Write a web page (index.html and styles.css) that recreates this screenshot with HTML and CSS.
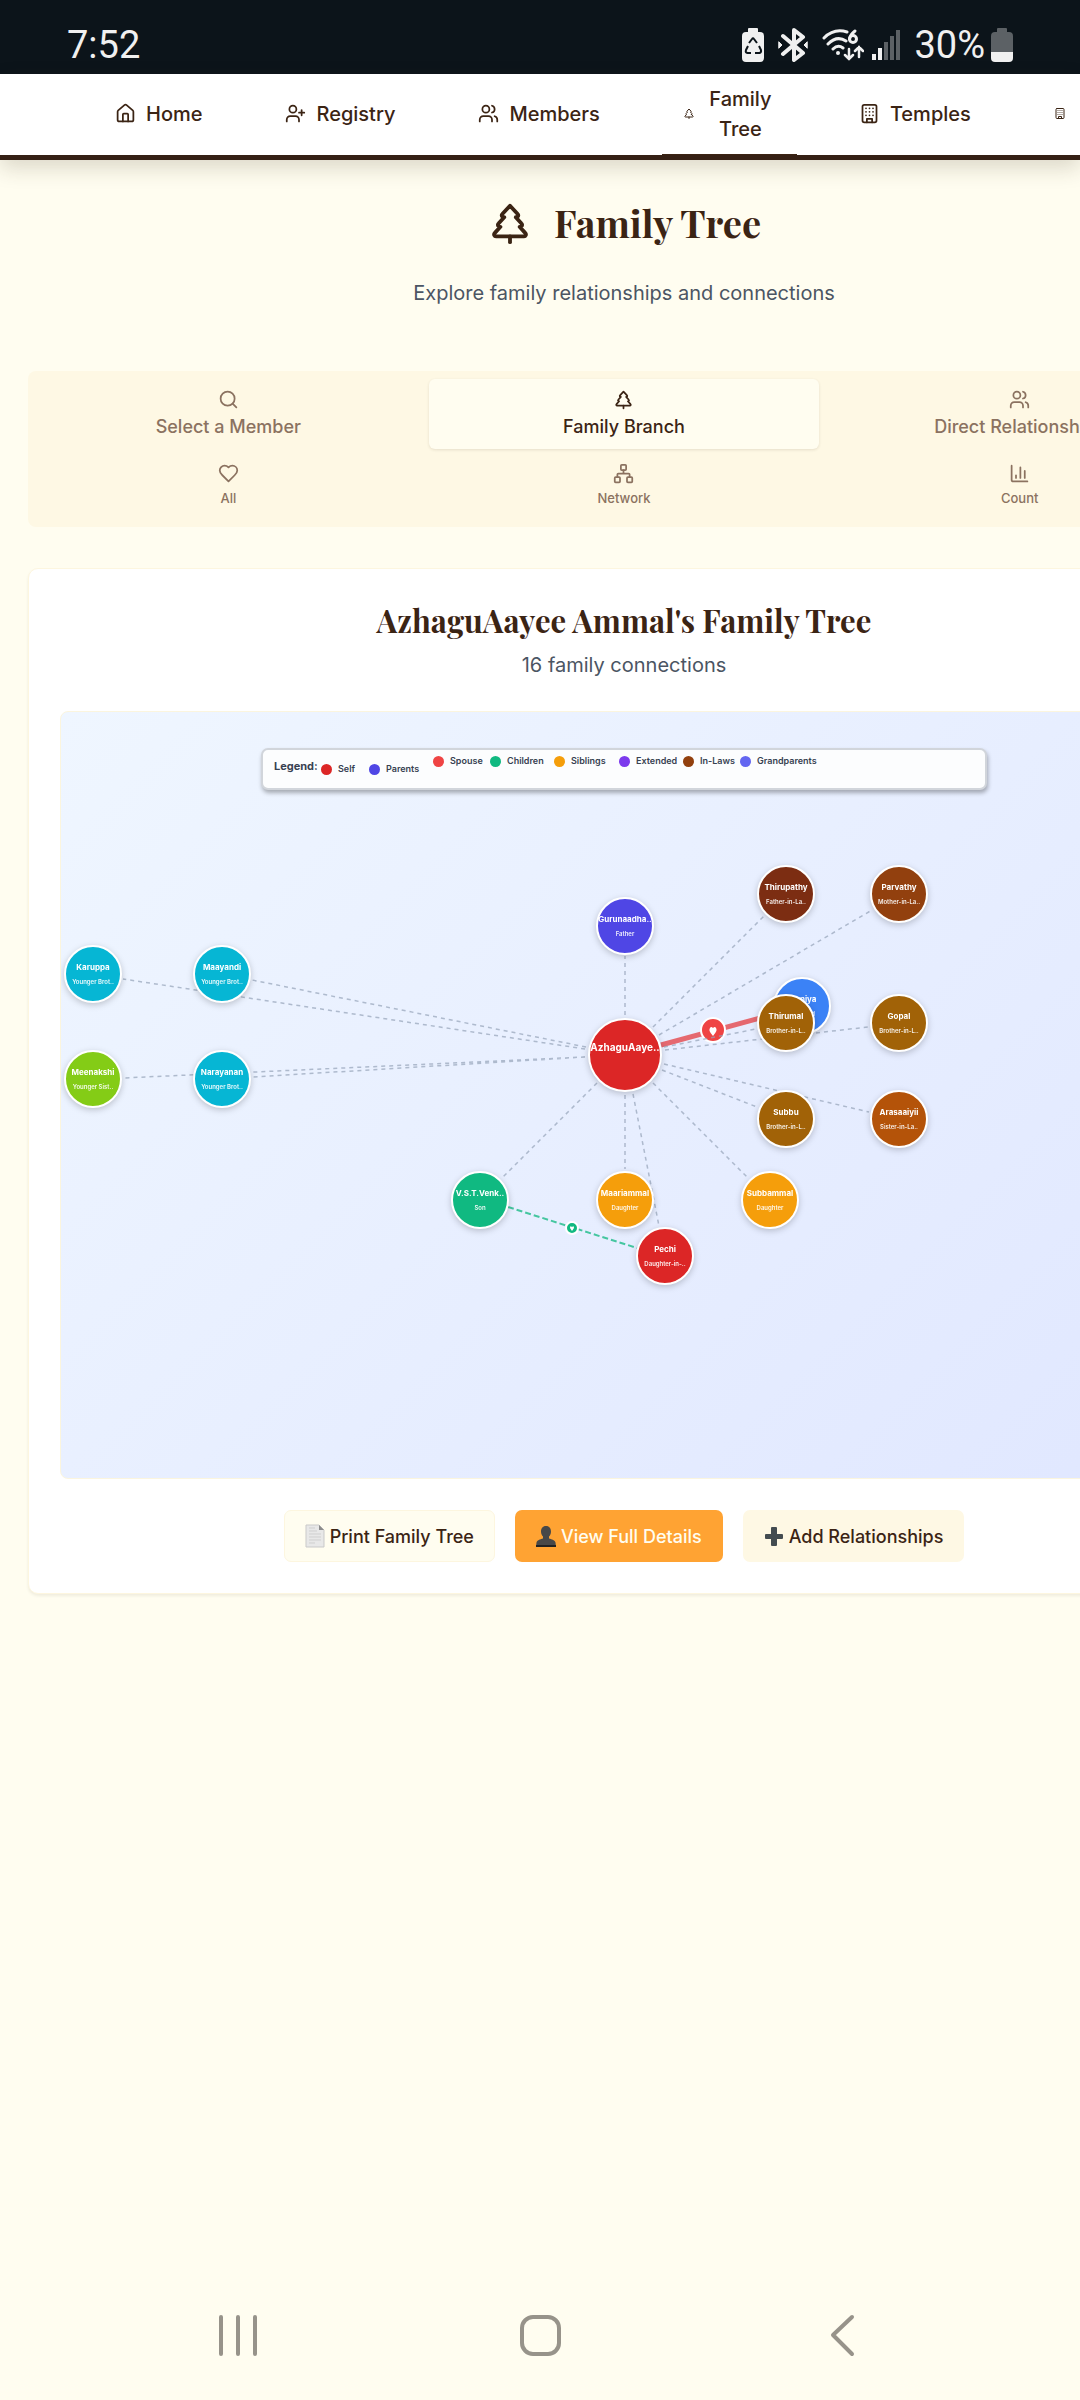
FILE: index.html
```html
<!DOCTYPE html>
<html lang="en">
<head>
<meta charset="utf-8">
<meta name="viewport" content="width=device-width, initial-scale=1">
<title>Family Tree</title>
<link rel="stylesheet" href="styles.css">
</head>
<body>
<svg class="sprite" aria-hidden="true">
  <symbol id="pine" viewBox="0 0 24 24"><path d="m17 14 3 3.3a1 1 0 0 1-.7 1.7H4.7a1 1 0 0 1-.7-1.7L7 14h-.3a1 1 0 0 1-.7-1.7L9 9h-.2A1 1 0 0 1 8 7.3L12 3l4 4.3a1 1 0 0 1-.8 1.7H15l3 3.3a1 1 0 0 1-.7 1.7H17Z"/><path d="M12 22v-3"/></symbol>
  <symbol id="users" viewBox="0 0 24 24"><path d="M16 21v-2a4 4 0 0 0-4-4H6a4 4 0 0 0-4 4v2"/><circle cx="9" cy="7" r="4"/><path d="M22 21v-2a4 4 0 0 0-3-3.87M16 3.13a4 4 0 0 1 0 7.75"/></symbol>
  <symbol id="building" viewBox="0 0 24 24"><rect x="4" y="2" width="16" height="20" rx="2"/><path d="M9 22v-4h6v4M8 6h.01M16 6h.01M12 6h.01M12 10h.01M12 14h.01M16 10h.01M16 14h.01M8 10h.01M8 14h.01"/></symbol>
</svg>

<div class="status">
  <span class="clock">7:52</span>
  <div class="status-icons">
    <svg width="22" height="34" viewBox="0 0 22 34"><path d="M7 0h8a1 1 0 0 1 1 1v3h2a4 4 0 0 1 4 4v22a4 4 0 0 1-4 4H4a4 4 0 0 1-4-4V8a4 4 0 0 1 4-4h2V1a1 1 0 0 1 1-1Z" fill="#f0f0f0"/><path d="m7 15 3-4q1-1.500 2 0l3 4M17 18l2 4q.5 2.500-1.500 3H13M9 25H5.500Q3 24.500 4 22l2-4" fill="none" stroke="#0c141a" stroke-width="2"/></svg>
    <svg width="30" height="34" viewBox="0 0 30 34" fill="none" stroke="#f0f0f0" stroke-width="4" stroke-linecap="round" stroke-linejoin="round"><path d="m5 8 20 17-9 7V2l9 7L5 26"/><path d="m1 14 3 3-3 3ZM29 14l-3 3 3 3Z" stroke-width="1" fill="#f0f0f0"/></svg>
    <svg width="42" height="34" viewBox="0 0 42 34" fill="none" stroke="#f0f0f0" stroke-width="3" stroke-linecap="round"><path d="M2 10Q12 0 25 4M6 16q9-9 18-3M11 21q5-5 10-1"/><circle cx="16" cy="25" r="2" fill="#f0f0f0" stroke="none"/><path d="M33 3q-5 4-5.500 8"/><circle cx="31" cy="11" r="3.500"/><path d="M27 21v10m-4-4 4 4 4-4M37 29V19m-4 4 4-4 4 4" stroke-width="2.500"/></svg>
    <svg width="28" height="34" viewBox="0 0 28 34"><path d="M0 26h4v6H0ZM6 20h4v12H6Z" fill="#f0f0f0"/><path d="M12 14h4v18h-4ZM18 8h4v24h-4ZM24 2h4v30h-4Z" fill="#5c6165"/></svg>
    <span class="percent">30%</span>
    <svg width="22" height="34" viewBox="0 0 22 34"><path d="M7 0h8a1 1 0 0 1 1 1v3h2a4 4 0 0 1 4 4v16H0V8a4 4 0 0 1 4-4h2V1a1 1 0 0 1 1-1Z" fill="#5c6165"/><path d="M0 24h22v6a4 4 0 0 1-4 4H4a4 4 0 0 1-4-4Z" fill="#f0f0f0"/></svg>
  </div>
</div>

<header class="topbar">
  <nav class="nav">
    <a class="nav-link" href="#home"><svg class="icon" viewBox="0 0 24 24"><path d="M15 21v-8a1 1 0 0 0-1-1h-4a1 1 0 0 0-1 1v8"/><path d="M3 10a2 2 0 0 1 .709-1.528l7-5.999a2 2 0 0 1 2.582 0l7 5.999A2 2 0 0 1 21 10v9a2 2 0 0 1-2 2H5a2 2 0 0 1-2-2z"/></svg><span>Home</span></a>
    <a class="nav-link" href="#registry"><svg class="icon" viewBox="0 0 24 24"><path d="M16 21v-2a4 4 0 0 0-4-4H6a4 4 0 0 0-4 4v2"/><circle cx="9" cy="7" r="4"/><path d="M19 8v6M22 11h-6"/></svg><span>Registry</span></a>
    <a class="nav-link" href="#members"><svg class="icon"><use href="#users"/></svg><span>Members</span></a>
    <a class="nav-link current" href="#tree"><svg class="icon tight"><use href="#pine"/></svg><span>Family Tree</span></a>
    <a class="nav-link" href="#temples"><svg class="icon"><use href="#building"/></svg><span>Temples</span></a>
    <a class="nav-link" href="#more" aria-label="More"><svg class="icon tight"><use href="#building"/></svg></a>
  </nav>
</header>

<main class="page">
  <h1 class="title"><svg class="icon title-icon"><use href="#pine"/></svg><span>Family Tree</span></h1>
  <p class="lead">Explore family relationships and connections</p>

  <div class="tabs" role="tablist">
    <button class="tab" role="tab" type="button"><svg class="icon" viewBox="0 0 24 24"><circle cx="11" cy="11" r="8"/><path d="m21 21-4.300-4.300"/></svg><span>Select a Member</span></button>
    <button class="tab active" role="tab" type="button" aria-selected="true"><svg class="icon"><use href="#pine"/></svg><span>Family Branch</span></button>
    <button class="tab" role="tab" type="button"><svg class="icon"><use href="#users"/></svg><span>Direct Relationships</span></button>
    <button class="tab small" role="tab" type="button"><svg class="icon" viewBox="0 0 24 24"><path d="M19 14c1.490-1.460 3-3.210 3-5.500A5.500 5.500 0 0 0 16.500 3c-1.760 0-3 .5-4.500 2-1.500-1.500-2.740-2-4.500-2A5.500 5.500 0 0 0 2 8.500c0 2.300 1.500 4.050 3 5.500l7 7Z"/></svg><span>All</span></button>
    <button class="tab small" role="tab" type="button"><svg class="icon" viewBox="0 0 24 24"><rect x="16" y="16" width="6" height="6" rx="1"/><rect x="2" y="16" width="6" height="6" rx="1"/><rect x="9" y="2" width="6" height="6" rx="1"/><path d="M5 16v-3a1 1 0 0 1 1-1h12a1 1 0 0 1 1 1v3M12 12V8"/></svg><span>Network</span></button>
    <button class="tab small" role="tab" type="button"><svg class="icon" viewBox="0 0 24 24"><path d="M3 3v16a2 2 0 0 0 2 2h16M18 17V9M13 17V5M8 17v-3"/></svg><span>Count</span></button>
  </div>

  <section class="card">
    <h2 class="card-title">AzhaguAayee Ammal's Family Tree</h2>
    <p class="card-sub">16 family connections</p>

    <div class="canvas">
      <div class="legend">
        <strong>Legend:</strong>
        <span class="key low self">Self</span>
        <span class="key low parents">Parents</span>
        <span class="key spouse">Spouse</span>
        <span class="key children">Children</span>
        <span class="key siblings">Siblings</span>
        <span class="key extended">Extended</span>
        <span class="key inlaws">In-Laws</span>
        <span class="key grand">Grandparents</span>
      </div>
      <svg class="graph" viewBox="0 0 1126 766">
        <g transform="translate(564 343)">
          <path class="marriage" d="M36-10 150-41"/>
          <circle cx="88" cy="-25" r="12" fill="#ef4444" stroke="#fff" stroke-width="2"/>
          <path d="M88-19c-4-5-4-6-3-8q1-2 3 0 2-2 3 0c1 2 1 3-3 8Z" fill="#fff"/>
          <path class="couple" d="M-117 152 12 193"/>
          <circle cx="-53" cy="173" r="6" fill="#10b981" stroke="#fff" stroke-width="2"/>
          <path d="M-53 176l-2-3q0-3 2-1 2-2 2 1Z" fill="#fff"/>
          <path class="links" d="M0-40V-99M28-28 139-139M34-20 247-145M39-8 131-26M40-5 243-28M37 15 132 52M39 9 244 57M-28 28-123 123M0 40V114M28 28 123 123M8 39 34 171M-40-6-502-76M-39-8-373-75M-40 2-502 23M-40 2-373 22"/>
          <g class="node"><circle r="36" fill="#dc2626"/><text class="name main" y="-4">AzhaguAaye..</text></g>
          <g class="node" transform="translate(0 -129)"><circle r="28" fill="#4f46e5"/><text class="name" y="-4">Gurunaadha..</text><text class="role" y="10">Father</text></g>
          <g class="node" transform="translate(177 -49)"><circle r="28" fill="#3b82f6"/><text class="name" y="-4">Muniya</text><text class="role" y="10">Husband</text></g>
          <g class="node" transform="translate(-145 145)"><circle r="28" fill="#10b981"/><text class="name" y="-4">V.S.T.Venk..</text><text class="role" y="10">Son</text></g>
          <g class="node" transform="translate(0 145)"><circle r="28" fill="#f59e0b"/><text class="name" y="-4">Maariammal</text><text class="role" y="10">Daughter</text></g>
          <g class="node" transform="translate(145 145)"><circle r="28" fill="#f59e0b"/><text class="name" y="-4">Subbammal</text><text class="role" y="10">Daughter</text></g>
          <g class="node" transform="translate(40 201)"><circle r="28" fill="#dc2626"/><text class="name" y="-4">Pechi</text><text class="role" y="10">Daughter-in-..</text></g>
          <g class="node" transform="translate(161 -161)"><circle r="28" fill="#7c2d12"/><text class="name" y="-4">Thirupathy</text><text class="role" y="10">Father-in-La..</text></g>
          <g class="node" transform="translate(274 -161)"><circle r="28" fill="#92400e"/><text class="name" y="-4">Parvathy</text><text class="role" y="10">Mother-in-La..</text></g>
          <g class="node" transform="translate(161 -32)"><circle r="28" fill="#a16207"/><text class="name" y="-4">Thirumal</text><text class="role" y="10">Brother-in-L..</text></g>
          <g class="node" transform="translate(274 -32)"><circle r="28" fill="#a16207"/><text class="name" y="-4">Gopal</text><text class="role" y="10">Brother-in-L..</text></g>
          <g class="node" transform="translate(161 64)"><circle r="28" fill="#a16207"/><text class="name" y="-4">Subbu</text><text class="role" y="10">Brother-in-L..</text></g>
          <g class="node" transform="translate(274 64)"><circle r="28" fill="#b45309"/><text class="name" y="-4">Arasaaiyii</text><text class="role" y="10">Sister-in-La..</text></g>
          <g class="node" transform="translate(-532 -81)"><circle r="28" fill="#06b6d4"/><text class="name" y="-4">Karuppa</text><text class="role" y="10">Younger Brot..</text></g>
          <g class="node" transform="translate(-403 -81)"><circle r="28" fill="#06b6d4"/><text class="name" y="-4">Maayandi</text><text class="role" y="10">Younger Brot..</text></g>
          <g class="node" transform="translate(-532 24)"><circle r="28" fill="#84cc16"/><text class="name" y="-4">Meenakshi</text><text class="role" y="10">Younger Sist..</text></g>
          <g class="node" transform="translate(-403 24)"><circle r="28" fill="#06b6d4"/><text class="name" y="-4">Narayanan</text><text class="role" y="10">Younger Brot..</text></g>
        </g>
      </svg>
    </div>

    <div class="actions">
      <button class="btn outline" type="button"><svg width="20" height="24" viewBox="0 0 20 24"><path d="M1 1h13l5 5v17H1Z" fill="#e8e8e8" stroke="#c9c9c9"/><path d="M14 1v5h5Z" fill="#8c8c8c"/><path d="M4 4h6M4 7h8M4 10h12M4 13h12M4 16h12M4 19h6" stroke="#cfcfcf"/></svg>Print Family Tree</button>
      <button class="btn primary" type="button"><svg width="20" height="24" viewBox="0 0 20 24"><path d="M10 2c3.500 0 5 2.500 5 5.500 0 2.500-1 4-2 5v2c3 1 6 1.500 6.500 4L20 23H0l.5-4.500c.5-2.500 3.500-3 6.500-4v-2c-1-1-2-2.500-2-5C5 4.500 6.500 2 10 2Z" fill="#484848"/><path d="M0 21h20v2H0Z" fill="#222"/></svg>View Full Details</button>
      <button class="btn soft" type="button"><svg width="20" height="24" viewBox="0 0 20 24"><path d="M8 3h4q1 0 1 1v6h5q1 0 1 1v3q0 1-1 1h-5v6q0 1-1 1H8q-1 0-1-1v-6H2q-1 0-1-1v-3q0-1 1-1h5V4q0-1 1-1Z" fill="#434c50"/></svg>Add Relationships</button>
    </div>
  </section>
</main>

<footer class="sysnav">
  <button type="button" aria-label="Recents"><svg width="42" height="44" viewBox="0 0 42 44"><path d="M4 4v37M21 4v37M38 4v37"/></svg></button>
  <button type="button" aria-label="Home screen"><svg width="42" height="44" viewBox="0 0 42 44"><rect x="3" y="4" width="37" height="37" rx="11"/></svg></button>
  <button type="button" aria-label="Back"><svg width="42" height="44" viewBox="0 0 42 44"><path d="M31 4 12 22l19 19"/></svg></button>
</footer>
</body>
</html>
```
FILE: styles.css
```css
* { box-sizing: border-box; }
body {
  margin: 0;
  min-height: 100vh;
  display: flex;
  flex-direction: column;
  overflow-x: hidden;
  background: #fffdf0;
  color: #3b2414;
  font-family: Inter, "Liberation Sans", sans-serif;
}
h1, h2, p { margin: 0; }
button { font: inherit; color: inherit; border: 0; background: none; padding: 0; }
.sprite { position: absolute; width: 0; height: 0; }
.icon {
  width: 21px; height: 21px; flex: none;
  fill: none; stroke: currentColor; stroke-width: 2;
  stroke-linecap: round; stroke-linejoin: round;
}

.status {
  display: flex; justify-content: space-between; align-items: center;
  height: 74px; padding: 15px 67px 0;
  background: #0c141a; color: #f0f0f0;
  font: 400 38px/44px Roboto, "Noto Sans", sans-serif;
}
.status-icons { display: flex; align-items: center; gap: 14px; }
.status-icons svg { flex: none; }
.status-icons svg:nth-of-type(4) { margin-left: -6px; }
.percent { margin-right: -8px; }

.topbar {
  position: relative;
  background: #fff;
  border-bottom: 5px solid #352014;
  box-shadow: 0 8px 20px rgba(60, 50, 30, .18);
}
.nav { display: flex; gap: 41px; height: 81px; padding-left: 94px; overflow: hidden; }
.nav-link {
  display: flex; align-items: center; gap: 10px; flex: none;
  padding: 0 21px 2px;
  color: inherit; text-decoration: none; text-align: center;
  font-size: 20px; line-height: 30px; font-weight: 500;
}
.nav-link.current { width: 135px; padding-bottom: 1px; border-bottom: 1px solid #3b2414; }
.nav-link.current span { flex: 1; }
.icon.tight { width: 12px; }

.page { width: 100%; min-width: 1248px; padding: 38px 28px 0; }
.title {
  display: flex; justify-content: center; align-items: center; gap: 21px;
  font: 700 38px/50px "Playfair Display", "Liberation Serif", serif;
}
.title-icon { width: 46px; height: 46px; }
.lead, .card-sub { font-size: 20px; line-height: 30px; color: #4b5563; text-align: center; }
.lead { margin-top: 30px; }

.tabs {
  display: grid; grid-template-columns: repeat(3, 1fr); gap: 4px 5px;
  margin-top: 63px; padding: 8px 5px;
  border-radius: 8px; background: #fef8e4;
}
.tab {
  display: flex; flex-direction: column; align-items: center; gap: 4px;
  padding: 10px 20px; border-radius: 6px;
  color: #8b7260; font-size: 18px; line-height: 25px; font-weight: 500;
}
.tab.small { font-size: 13px; line-height: 21px; }
.tab.active { background: #fffdf0; color: #3b2414; box-shadow: 0 1px 3px rgba(60, 40, 20, .12); }

.card {
  margin-top: 41px; padding: 31px;
  border: 1px solid #fdf6df; border-radius: 10px; background: #fff;
  box-shadow: 0 2px 3px rgba(60, 50, 20, .08);
}
.card-title { font: 700 31px/40px "Playfair Display", "Liberation Serif", serif; text-align: center; }
.card-sub { margin-top: 10px; }
.canvas {
  position: relative; margin-top: 31px;
  border: 1px solid #fbf5de; border-radius: 8px;
  background: linear-gradient(135deg, #eff6ff, #e0e7ff);
}
.graph { display: block; width: 100%; height: auto; }
.legend {
  position: absolute; top: 36px; left: 50%;
  display: grid; grid-template-columns: 47px 48px 64px 57px 64px 65px 64px 57px auto;
  width: 726px; height: 42px; margin-left: -363px; padding: 5px 11px;
  border: 2px solid #d1d5db; border-radius: 7px; background: #fcfdfe;
  box-shadow: 1px 3px 4px rgba(0, 0, 0, .3);
  color: #374151; font-size: 9px; line-height: 12px; font-weight: 600;
}
.legend strong { padding-top: 5px; font-size: 11px; font-weight: 700; }
.key { display: flex; align-items: center; align-self: start; gap: 6px; white-space: nowrap; }
.key::before { content: ""; width: 11px; height: 11px; border-radius: 50%; background: var(--dot); }
.key.low { margin-top: 8px; }
.self { --dot: #dc2626; }
.parents { --dot: #4f46e5; }
.spouse { --dot: #ef4444; }
.children { --dot: #10b981; }
.siblings { --dot: #f59e0b; }
.extended { --dot: #7c3aed; }
.inlaws { --dot: #92400e; }
.grand { --dot: #6366f1; }

.links { fill: none; stroke: #94a3b8; stroke-width: 1.500; stroke-dasharray: 4 4; opacity: .7; }
.marriage { stroke: #e5484d; stroke-width: 5; opacity: .8; }
.couple { stroke: #10b981; stroke-width: 2; stroke-dasharray: 6 3; opacity: .75; }
.node { filter: drop-shadow(0 2px 3px rgba(0, 0, 0, .2)); }
.node circle { stroke: #fff; stroke-width: 2; }
.node text { fill: #fff; text-anchor: middle; }
.name { font-size: 8px; font-weight: 700; }
.name.main { font-size: 10px; }
.role { font-size: 6px; font-weight: 600; opacity: .9; }

.actions { display: flex; justify-content: center; gap: 20px; margin-top: 31px; }
.btn {
  display: flex; align-items: center; gap: 5px;
  height: 52px; padding: 0 20px;
  border: 1px solid transparent; border-radius: 7px;
  font-size: 18px; font-weight: 500;
}
.btn.outline { background: #fffdf0; border-color: #fdf6df; }
.btn.primary { background: #ffa333; color: #fffdf0; }
.btn.soft { background: #fef8e4; }

.sysnav {
  display: grid; grid-template-columns: repeat(3, 1fr); justify-items: center;
  margin-top: auto; padding: 40px 8% 43px;
}
.sysnav svg { display: block; fill: none; stroke: #97938a; stroke-width: 4; stroke-linecap: round; stroke-linejoin: round; }
```
